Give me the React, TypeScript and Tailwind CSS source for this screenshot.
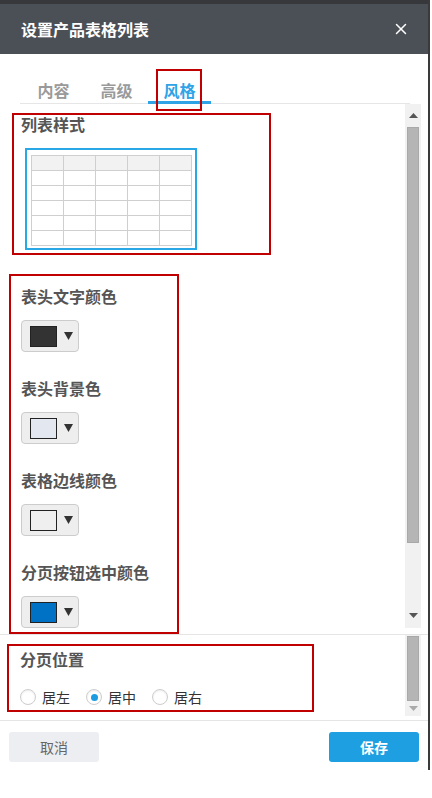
import { X } from "lucide-react";

const FONT = "font-['Noto_Sans_CJK_SC','Microsoft_YaHei','Liberation_Sans',sans-serif]";

interface ColorPick {
  label: string;
  color: string;
}

const COLOR_PICKS: ColorPick[] = [
  { label: "表头文字颜色", color: "#333333" },
  { label: "表头背景色", color: "#e3e7ef" },
  { label: "表格边线颜色", color: "#efefef" },
  { label: "分页按钮选中颜色", color: "#0072c6" },
];

const TABS = ["内容", "高级", "风格"];
const ALIGNS = ["居左", "居中", "居右"];

function ArrowDown({ color = "#333" }: { color?: string }) {
  return (
    <svg width="9" height="8" viewBox="0 0 9 8">
      <polygon points="0,0 9,0 4.5,8" fill={color} />
    </svg>
  );
}

function ArrowUp({ color = "#555" }: { color?: string }) {
  return (
    <svg width="9" height="5" viewBox="0 0 9 5">
      <polygon points="0,5 9,5 4.5,0" fill={color} />
    </svg>
  );
}

function ColorButton({ color }: { color: string }) {
  return (
    <div className="mt-[14px] w-[58px] h-[32px] rounded-[4px] border border-[#cccccc] bg-[#eeeeee] flex items-center pl-[8px]">
      <div className="w-[27px] h-[21px] border border-[#222]" style={{ background: color }} />
      <div className="ml-[7px]">
        <ArrowDown />
      </div>
    </div>
  );
}

function Radio({ checked }: { checked?: boolean }) {
  return (
    <div className="w-[16px] h-[16px] rounded-full border border-[#cdcdcd] bg-white flex items-center justify-center shadow-[inset_0_1px_2px_rgba(0,0,0,0.08)]">
      {checked && <div className="w-[7px] h-[7px] rounded-full bg-[#1d9be0]" />}
    </div>
  );
}

function TablePreview() {
  return (
    <div className="grid grid-cols-5 w-[161px] border-l border-t border-[#cfcfcf]">
      {Array.from({ length: 30 }).map((_, i) => (
        <div
          key={i}
          className={`h-[15px] border-r border-b border-[#cfcfcf] ${i < 5 ? "bg-[#f2f2f2]" : "bg-white"}`}
        />
      ))}
    </div>
  );
}

export default function App() {
  return (
    <div className={`w-[432px] h-[798px] bg-white overflow-hidden ${FONT}`}>
      <div className="w-[430px] h-[770px] border-r-2 border-[#3a3a3a] flex flex-col">
        {/* top strip + header */}
        <div className="h-[4px] bg-[#36383c]" />
        <div className="h-[50px] bg-[#4b4f56] flex items-center justify-between pl-[21px] pr-[18px]">
          <span className="text-white font-bold text-[16px] leading-[20px]">设置产品表格列表</span>
          <X size={18} strokeWidth={2} color="#ffffff" />
        </div>

        {/* tabs */}
        <div className="ml-[20px] w-[390px] h-[50px] border-b border-[#e6e6e6] flex pl-[2px]">
          {TABS.map((t, i) => {
            const active = i === 2;
            return (
              <div
                key={t}
                className={`relative w-[63px] h-[50px] pt-[26px] text-center text-[16px] leading-[20px] font-bold border-b-[3px] -mb-px ${
                  active ? "text-[#2ea3e6] border-[#2ea3e6]" : "text-[#9a9a9a] border-transparent"
                }`}
              >
                {t}
                {active && (
                  <div className="absolute left-[8px] top-[15px] w-[46px] h-[42px] border-2 border-[#c00000]" />
                )}
              </div>
            );
          })}
        </div>

        {/* scroll view, part 1 */}
        <div className="h-[530px] flex">
          <div className="w-[405px] overflow-hidden">
            <div className="mt-[9px] ml-[12px] w-[259px] h-[142px] border-2 border-[#c00000]">
              <div className="pl-[7px] text-[16px] leading-[18px] font-bold text-[#555]">列表样式</div>
              <div className="mt-[15px] ml-[11px] w-[172px] h-[102px] border-2 border-[#2aa8e6] pl-[4px] pt-[5px]">
                <TablePreview />
              </div>
            </div>

            <div className="mt-[19px] ml-[9px] w-[170px] h-[360px] border-2 border-[#c00000] pt-[10px] pl-[10px]">
              {COLOR_PICKS.map((c, i) => (
                <div key={c.label} className={i > 0 ? "mt-[26px]" : ""}>
                  <div className="text-[16px] leading-[20px] font-bold text-[#555]">{c.label}</div>
                  <ColorButton color={c.color} />
                </div>
              ))}
            </div>
          </div>

          <div className="w-[16px] h-[524px] bg-[#f1f1f1] flex flex-col items-center">
            <div className="h-[23px] flex items-center justify-center">
              <ArrowUp />
            </div>
            <div className="w-[12px] h-[416px] bg-[#b5b5b5] border border-[#a9a9a9]" />
            <div className="flex-1" />
            <div className="h-[20px] flex items-center justify-center pb-[6px]">
              <svg width="9" height="5" viewBox="0 0 9 5">
                <polygon points="0,0 9,0 4.5,5" fill="#555" />
              </svg>
            </div>
          </div>
        </div>

        <div className="h-px bg-[#e5e5e5]" />

        {/* scroll view, part 2 */}
        <div className="h-[85px] flex">
          <div className="w-[405px]">
            <div className="mt-[9px] ml-[7px] w-[307px] h-[68px] border-2 border-[#c00000] pl-[11px] pt-[3px]">
              <div className="text-[16px] leading-[20px] font-bold text-[#555]">分页位置</div>
              <div className="mt-[20px] flex items-center">
                {ALIGNS.map((a, i) => (
                  <div key={a} className={`flex items-center ${i > 0 ? "ml-[16px]" : ""}`}>
                    <Radio checked={i === 1} />
                    <span className="ml-[6px] text-[14px] leading-[16px] text-[#333]">{a}</span>
                  </div>
                ))}
              </div>
            </div>
          </div>
          <div className="w-[16px] h-[81px] bg-[#f1f1f1] flex flex-col items-center">
            <div className="mt-px w-[12px] h-[65px] bg-[#b5b5b5] border border-[#a9a9a9]" />
            <div className="flex-1 flex items-center justify-center">
              <svg width="9" height="5" viewBox="0 0 9 5">
                <polygon points="0,0 9,0 4.5,5" fill="#aaa" />
              </svg>
            </div>
          </div>
        </div>

        <div className="h-px bg-[#e5e5e5]" />

        {/* footer */}
        <div className="pt-[11px] px-[9px] flex justify-between">
          <button className="w-[90px] h-[30px] rounded-[3px] bg-[#eceef2] text-[14px] text-[#666]">取消</button>
          <button className="w-[90px] h-[30px] rounded-[3px] bg-[#1e9fe2] text-[14px] font-bold text-white">保存</button>
        </div>
      </div>
    </div>
  );
}
